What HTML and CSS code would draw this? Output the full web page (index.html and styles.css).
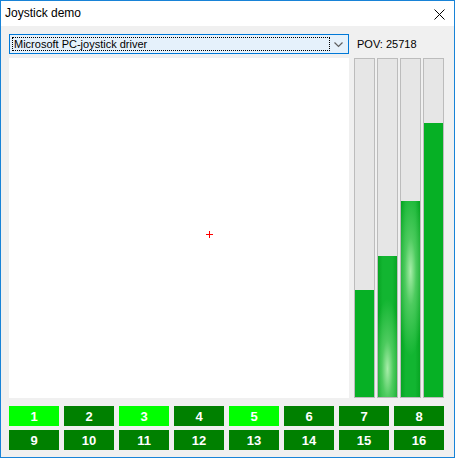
FILE: index.html
```html
<!DOCTYPE html>
<html>
<head>
<meta charset="utf-8">
<link rel="stylesheet" href="styles.css">
</head>
<body>
<div class="window">
  <div class="titlebar">
    <span class="title">Joystick demo</span>
    <span class="close">
      <svg width="11" height="11" viewBox="0 0 11 11"><path d="M0.5 0.5 L10.5 10.5 M10.5 0.5 L0.5 10.5" stroke="#000" stroke-width="1" fill="none"/></svg>
    </span>
  </div>
  <div class="client">
    <div class="toprow">
      <div class="combo">
        <div class="combo-text">Microsoft PC-joystick driver</div>
        <div class="combo-arrow">
          <svg width="9" height="6" viewBox="0 0 9 6"><path d="M0.5 0.5 L4.5 4.5 L8.5 0.5" stroke="#606060" stroke-width="1.2" fill="none"/></svg>
        </div>
      </div>
      <div class="pov">POV: 25718</div>
    </div>
    <div class="mainrow">
      <div class="canvas">
        <div class="cross"></div>
      </div>
      <div class="bars">
        <div class="bar"><div class="fill" style="height:107px"></div></div>
        <div class="bar"><div class="fill glow-low" style="height:141px"></div></div>
        <div class="bar"><div class="fill glow-high" style="height:196px"></div></div>
        <div class="bar"><div class="fill" style="height:274px"></div></div>
      </div>
    </div>
    <div class="buttons">
      <div class="btn on">1</div>
      <div class="btn">2</div>
      <div class="btn on">3</div>
      <div class="btn">4</div>
      <div class="btn on">5</div>
      <div class="btn">6</div>
      <div class="btn">7</div>
      <div class="btn">8</div>
      <div class="btn">9</div>
      <div class="btn">10</div>
      <div class="btn">11</div>
      <div class="btn">12</div>
      <div class="btn">13</div>
      <div class="btn">14</div>
      <div class="btn">15</div>
      <div class="btn">16</div>
    </div>
  </div>
</div>
</body>
</html>
```
FILE: styles.css
```css
html, body {
  margin: 0;
  padding: 0;
  background: #f0f0f0;
}
.window {
  box-sizing: border-box;
  width: 455px;
  height: 458px;
  border: 1px solid #1883d7;
  background: #f0f0f0;
  font-family: "Liberation Sans", Arial, sans-serif;
  display: flex;
  flex-direction: column;
}
.titlebar {
  height: 25px;
  background: #ffffff;
  display: flex;
  align-items: center;
  justify-content: space-between;
  flex-shrink: 0;
}
.title {
  font-size: 12px;
  color: #000;
  padding-left: 4px;
  padding-bottom: 1px;
}
.close {
  display: flex;
  width: 11px;
  height: 11px;
  margin-right: 9px;
  margin-top: 2px;
}
.client {
  padding: 8px 9px 0 8px;
  display: flex;
  flex-direction: column;
}
.toprow {
  display: flex;
  align-items: center;
  height: 20px;
}
.combo {
  box-sizing: border-box;
  width: 340px;
  height: 20px;
  border: 1px solid #0078d7;
  background: #e5f1fb;
  display: flex;
  align-items: center;
  padding: 2px;
}
.combo-text {
  box-sizing: border-box;
  flex: 0 0 318px;
  height: 14px;
  border: 1px dotted #000;
  font-size: 11px;
  line-height: 12px;
  padding-left: 1px;
  color: #000;
  white-space: nowrap;
}
.combo-arrow {
  flex: 1;
  display: flex;
  justify-content: center;
  align-items: center;
  padding-top: 1px;
}
.pov {
  margin-left: 8px;
  font-size: 11px;
  color: #000;
}
.mainrow {
  display: flex;
  margin-top: 4px;
  height: 340px;
}
.canvas {
  position: relative;
  width: 340px;
  height: 340px;
  background: #ffffff;
}
.cross {
  position: absolute;
  left: 197px;
  top: 173px;
  width: 7px;
  height: 7px;
  background:
    linear-gradient(#ff0000, #ff0000) center / 7px 1px no-repeat,
    linear-gradient(#ff0000, #ff0000) center / 1px 7px no-repeat;
}
.bars {
  display: flex;
  gap: 2px;
  margin-left: 5px;
}
.bar {
  box-sizing: border-box;
  width: 21px;
  height: 340px;
  border: 1px solid #bcbcbc;
  background: #e6e6e6;
  display: flex;
  flex-direction: column;
  justify-content: flex-end;
}
.fill {
  background: #06b025;
}
.glow-low {
  background:
    radial-gradient(ellipse 14px 70px at 50% 80%, rgba(175,240,175,0.95) 0, rgba(110,215,120,0.65) 40%, rgba(6,176,37,0) 100%),
    linear-gradient(90deg, #07a523 0, #12b531 25%, #12b531 75%, #07a523 100%);
}
.glow-high {
  background:
    radial-gradient(ellipse 14px 85px at 50% 36%, rgba(175,240,175,0.95) 0, rgba(110,215,120,0.65) 40%, rgba(6,176,37,0) 100%),
    linear-gradient(90deg, #07a523 0, #12b531 25%, #12b531 75%, #07a523 100%);
}
.buttons {
  margin-top: 8px;
  display: grid;
  grid-template-columns: repeat(8, 50px);
  grid-auto-rows: 20px;
  column-gap: 5px;
  row-gap: 4px;
}
.btn {
  background: #008000;
  color: #ffffff;
  font-weight: bold;
  font-size: 13px;
  display: flex;
  align-items: center;
  justify-content: center;
}
.btn.on {
  background: #00ff00;
}
```
